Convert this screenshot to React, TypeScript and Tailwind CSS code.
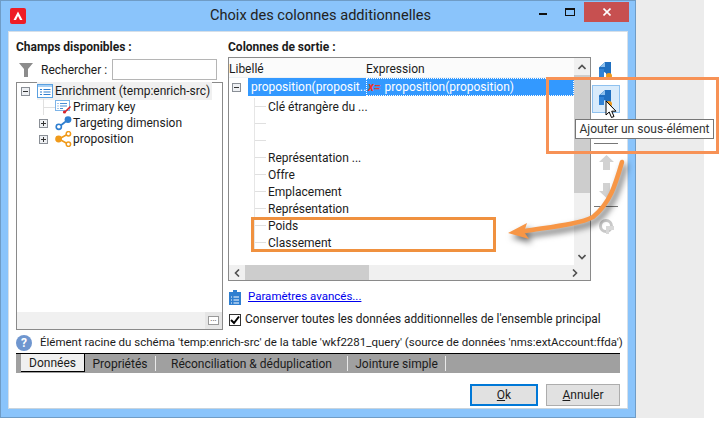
import React from 'react';

const ROWS = ['Clé étrangère du ...', '', '', 'Représentation ...', 'Offre', 'Emplacement', 'Représentation', 'Poids', 'Classement'];
const TABS = [
  { label: 'Propriétés', width: 'w-[71px]' },
  { label: 'Réconciliation & déduplication', width: 'w-[192px]' },
  { label: 'Jointure simple', width: 'w-[98px]' },
];

function ExpandBox({ open }: { open?: boolean }) {
  return (
    <span className="w-[9px] h-[9px] border border-[#8a8f96] bg-[#eef0f3] flex items-center justify-center relative shrink-0">
      <span className="w-[5px] h-px bg-[#333]" />
      {!open && <span className="absolute w-px h-[5px] bg-[#333]" />}
    </span>
  );
}

function ListIcon() {
  return (
    <svg width="16" height="14" viewBox="0 0 16 14" className="shrink-0">
      <rect x="0.5" y="0.5" width="15" height="13" fill="#fff" stroke="#5aa0e0" />
      <rect x="1" y="1" width="14" height="2" fill="#a8d0f4" />
      <path d="M3 5.5h2M3 8h2M3 10.5h2M6.5 5.5h7M6.5 8h7M6.5 10.5h7" stroke="#2f7fd0" />
    </svg>
  );
}

function KeyListIcon() {
  return (
    <svg width="17" height="14" viewBox="0 0 17 14" className="shrink-0">
      <rect x="0.5" y="0.5" width="14" height="10" fill="#fff" stroke="#7db4e8" />
      <path d="M2.5 3.5h1M2.5 6h1M5 3.5h7M5 6h7M2.5 8.5h1M5 8.5h3" stroke="#4a8fd6" />
      <path d="M15.5 6.5L10 12" stroke="#d8232a" strokeWidth="1.6" />
      <circle cx="9.5" cy="12" r="1.6" fill="#d8232a" />
    </svg>
  );
}

function LinkIcon() {
  return (
    <svg width="17" height="15" viewBox="0 0 17 15" className="shrink-0">
      <path d="M5 10L12 4.5" stroke="#2f7fd0" strokeWidth="1.8" />
      <circle cx="3.8" cy="10.8" r="2.6" fill="#fff" stroke="#2f7fd0" strokeWidth="1.6" />
      <circle cx="13" cy="3.6" r="3.4" fill="#2f7fd0" />
    </svg>
  );
}

function ShareIcon() {
  return (
    <svg width="17" height="16" viewBox="0 0 17 16" className="shrink-0">
      <path d="M4 8L13 3M4 8L13 13" stroke="#f09a1a" strokeWidth="1.6" />
      <circle cx="3.6" cy="8" r="3.4" fill="#f09a1a" />
      <circle cx="13.4" cy="2.8" r="2.2" fill="#fff" stroke="#f09a1a" strokeWidth="1.5" />
      <circle cx="13.4" cy="13.2" r="2.2" fill="#fff" stroke="#f09a1a" strokeWidth="1.5" />
    </svg>
  );
}

function BlockIcon({ dot }: { dot: string }) {
  return (
    <svg width="14" height="18" viewBox="0 0 14 18">
      <path d="M6 0H12V13H7.5A3 3 0 0 0 5 10V7H0V5.5L6 0Z" fill="#1f6fc0" />
      <path d="M0 7H5V15H0Z" fill="#2f82d6" />
      <path d="M6 0V5H1Z" fill="#8cc0ee" />
      <circle cx="10" cy="14" r="3" fill={dot} />
    </svg>
  );
}

function ScrollArrow({ d }: { d: string }) {
  return (
    <svg width="8" height="6" viewBox="0 0 8 6">
      <path d={d} fill="none" stroke="#505050" strokeWidth="1.6" />
    </svg>
  );
}

export default function App() {
  return (
    <div className="relative w-[719px] h-[433px] bg-white overflow-hidden text-[12px] text-[#1b1b1b]" style={{ fontFamily: 'Roboto, sans-serif' }}>
      <div className="flex items-start w-[704px] h-[418px] bg-[#ececec]">
        <div className="w-[636px] h-[418px] bg-[#8ac4fb] border border-[#6f9cc6] flex flex-col shrink-0">
          {/* title bar */}
          <div className="h-[30px] flex items-center relative shrink-0">
            <svg width="16" height="16" viewBox="0 0 16 16" className="ml-[9px] shrink-0">
              <rect width="16" height="16" rx="2" fill="#ee1c25" />
              <path d="M3.5 12L8 3.5L12.5 12H10L8 8L6 12Z" fill="#fff" />
            </svg>
            <span className="flex-1 text-center text-[14.6px] text-[#222] pl-[86px]">Choix des colonnes additionnelles</span>
            <div className="flex items-center h-[21px] self-start">
              <span className="w-[27px] flex justify-center pt-[5px]"><span className="w-[8px] h-[2px] bg-[#111]" /></span>
              <span className="w-[27px] flex justify-center"><span className="w-[10px] h-[8px] border border-[#111] border-t-2" /></span>
              <span className="w-[45px] h-[20px] bg-[#c75050] text-white flex items-center justify-center ml-[1px] mr-[6px]">
                <svg width="8" height="8" viewBox="0 0 8 8"><path d="M0.5 0.5L7.5 7.5M7.5 0.5L0.5 7.5" stroke="#fff" strokeWidth="1.6" /></svg>
              </span>
            </div>
          </div>
          {/* body */}
          <div className="mx-[7px] h-[378px] bg-white border border-[#d6dfe8] border-b-[#c8d4de] pl-[7px] pr-[7px] pt-[6px] flex flex-col">
            <div className="flex gap-[5px] h-[292px] shrink-0">
              {/* left column */}
              <div className="w-[207px] flex flex-col">
                <div className="h-[19px] font-bold leading-[19px] whitespace-nowrap">Champs disponibles :</div>
                <div className="h-[25px] flex items-center">
                  <svg width="14" height="14" viewBox="0 0 14 14" className="ml-[3px] shrink-0"><path d="M0 0H14L9 6V14H5V6Z" fill="#8c8c8c" /></svg>
                  <span className="ml-[8px] w-[71px] whitespace-nowrap">Rechercher :</span>
                  <span className="w-[105px] h-[21px] border border-[#b5b5b5] bg-white shrink-0" />
                </div>
                <div className="flex-1 border border-[#8a8a8a] flex flex-col">
                  <div className="flex-1">
                    <div className="h-[16px] flex items-center pl-[4px] gap-[7px] whitespace-nowrap">
                      <ExpandBox open />
                      <span className="flex items-center gap-[2px] bg-[#f0f0f0] pr-[2px]"><ListIcon /><span>Enrichment (temp:enrich-src)</span></span>
                    </div>
                    <div className="h-[16px] flex items-center whitespace-nowrap">
                      <span className="ml-[26px] w-[12px] h-full border-l border-[#e0e0e0] flex items-center shrink-0"><span className="w-full h-px bg-[#e0e0e0]" /></span>
                      <KeyListIcon /><span className="ml-[1px]">Primary key</span>
                    </div>
                    <div className="h-[16px] flex items-center pl-[22px] gap-[7px] whitespace-nowrap"><ExpandBox /><LinkIcon /><span className="-ml-[6px]">Targeting dimension</span></div>
                    <div className="h-[16px] flex items-center pl-[22px] gap-[7px] whitespace-nowrap"><ExpandBox /><ShareIcon /><span className="-ml-[6px]">proposition</span></div>
                  </div>
                  <div className="h-[17px] bg-[#f0f0f0] flex justify-end">
                    <span className="w-[17px] h-[17px] bg-[#e6e6e6] flex items-center justify-center">
                      <span className="w-[11px] h-[9px] border border-[#999] bg-white text-[8px] leading-[4px] text-center">...</span>
                    </span>
                  </div>
                </div>
              </div>
              {/* right column */}
              <div className="w-[392px] flex flex-col">
                <div className="h-[19px] font-bold leading-[19px] whitespace-nowrap">Colonnes de sortie :</div>
                <div className="flex h-[224px]">
                  <div className="w-[363px] border border-[#8a8a8a] flex flex-col shrink-0">
                    <div className="flex flex-1 min-h-0">
                      <div className="flex-1 flex flex-col min-w-0">
                        <div className="h-[20px] flex items-center bg-[#fbfbfb] shrink-0 border-b border-[#eef2f7] pt-[2px]">
                          <span className="w-[137px]">Libellé</span>
                          <span>Expression</span>
                        </div>
                        <div className="h-[18px] flex items-center shrink-0">
                          <span className="w-[19px] pl-[3px]"><ExpandBox open /></span>
                          <span className="w-[118px] h-full bg-[#3399ff] text-white pl-[3px] leading-[18px] whitespace-nowrap overflow-hidden">proposition(proposit..</span>
                          <span className="flex-1 h-full bg-[#3399ff] text-white border border-dotted border-white flex items-center leading-[16px] whitespace-nowrap">
                            <span className="font-bold text-[#e8392f] italic ml-[1px] mr-[4px]">x=</span>proposition(proposition)
                          </span>
                        </div>
                        <div className="pt-[2px]">
                          {ROWS.map((row, i) => (
                            <div key={i} className="h-[17px] flex items-center">
                              <span className="w-[26px] h-full border-r border-[#e6e6e6] shrink-0" />
                              <span className="w-[11px] h-px bg-[#e0e0e0] shrink-0" />
                              <span className="pl-[2px] pt-px whitespace-nowrap">{row}</span>
                            </div>
                          ))}
                        </div>
                      </div>
                      <div className="w-[16px] bg-[#f0f0f0] flex flex-col items-center shrink-0">
                        <span className="h-[17px] flex items-center"><ScrollArrow d="M0.5 5L4 1.5L7.5 5" /></span>
                        <span className="w-full h-[118px] bg-[#cdcdcd]" />
                        <span className="mt-auto h-[17px] flex items-center"><ScrollArrow d="M0.5 1L4 4.5L7.5 1" /></span>
                      </div>
                    </div>
                    <div className="h-[15px] bg-[#f0f0f0] flex items-center shrink-0">
                      <span className="w-[16px] flex justify-center"><svg width="6" height="8" viewBox="0 0 6 8"><path d="M5 0.5L1.5 4L5 7.5" fill="none" stroke="#505050" strokeWidth="1.6" /></svg></span>
                      <span className="w-[124px] h-full bg-[#cdcdcd]" />
                      <span className="ml-auto w-[30px] flex justify-center"><svg width="6" height="8" viewBox="0 0 6 8"><path d="M1 0.5L4.5 4L1 7.5" fill="none" stroke="#505050" strokeWidth="1.6" /></svg></span>
                    </div>
                  </div>
                  {/* toolbar */}
                  <div className="flex-1 flex flex-col items-center pl-[1px]">
                    <span className="h-[28px] flex items-center justify-center"><BlockIcon dot="#f09a1a" /></span>
                    <span className="w-[28px] h-[28px] bg-[#d9ebfb] border border-[#8fc1ef] flex items-center justify-center"><BlockIcon dot="#f09a1a" /></span>
                    <span className="mt-[30px] w-[24px] h-px bg-[#777]" />
                    <span className="mt-[11px]"><svg width="15" height="15" viewBox="0 0 15 15"><path d="M7.5 0L15 7H11V15H4V7H0Z" fill="#d2d2d2" /></svg></span>
                    <span className="mt-[13px]"><svg width="15" height="15" viewBox="0 0 15 15"><path d="M7.5 15L15 8H11V0H4V8H0Z" fill="#d2d2d2" /></svg></span>
                    <span className="mt-[8px] w-[24px] h-px bg-[#777]" />
                    <span className="mt-[11px]"><svg width="16" height="16" viewBox="0 0 16 16"><circle cx="8" cy="8" r="5.5" fill="none" stroke="#c8c8c8" strokeWidth="3" /><path d="M8 8H16V12H11V16H8Z" fill="#d8d8d8" /></svg></span>
                  </div>
                </div>
                <div className="h-[24px] flex items-center pt-[8px]">
                  <svg width="12" height="15" viewBox="0 0 12 15" className="ml-[1px] shrink-0"><rect y="2" width="12" height="13" fill="#2f7fd0" /><rect x="4" width="4" height="4" fill="#2f7fd0" /><path d="M2 7h1M4.5 7h5.5M2 10h1M4.5 10h5.5M2 13h1M4.5 13h5.5" stroke="#fff" /></svg>
                  <span className="ml-[7px] text-[11.5px] text-[#0000ee] underline whitespace-nowrap">Paramètres avancés...</span>
                </div>
                <div className="h-[25px] flex items-center pt-[5px]">
                  <span className="ml-[1px] w-[12px] h-[12px] border border-[#333] flex items-center justify-center shrink-0">
                    <svg width="10" height="10" viewBox="0 0 10 10"><path d="M1 5L4 8L9 1.5" fill="none" stroke="#000" strokeWidth="2" /></svg>
                  </span>
                  <span className="ml-[4px] text-[11.85px] whitespace-nowrap">Conserver toutes les données additionnelles de l'ensemble principal</span>
                </div>
              </div>
            </div>
            <div className="h-[21px] flex items-center mt-[2px] shrink-0">
              <svg width="16" height="16" viewBox="0 0 16 16" className="shrink-0"><circle cx="8" cy="8" r="8" fill="#6f96cf" /><text x="8" y="12" textAnchor="middle" fontSize="12" fontWeight="700" fill="#fff">?</text></svg>
              <span className="ml-[8px] text-[11.5px] whitespace-nowrap">Élément racine du schéma 'temp:enrich-src' de la table 'wkf2281_query' (source de données 'nms:extAccount:ffda')</span>
            </div>
            <div className="h-[20px] bg-[#a0a0a0] border-t border-black flex items-stretch w-[604px] shrink-0">
              <span className="ml-[5px] w-[64px] bg-[#f0f0f0] border-r border-b border-black flex items-center justify-center mb-[1px]">Données</span>
              {TABS.map(tab => (
                <span key={tab.label} className={`${tab.width} flex items-center justify-center border-r border-[#e8e8e8] my-[2px] whitespace-nowrap`}>{tab.label}</span>
              ))}
            </div>
            <div className="flex justify-end gap-[8px] mt-[11px] w-[604px] shrink-0">
              <span className="w-[68px] h-[22px] bg-[#e1e1e1] border-2 border-[#0078d7] flex items-center justify-center"><span><u>O</u>k</span></span>
              <span className="w-[74px] h-[22px] bg-[#e1e1e1] border border-[#adadad] flex items-center justify-center"><span><u>A</u>nnuler</span></span>
            </div>
          </div>
        </div>
      </div>

      {/* annotations over the window */}
      <div className="absolute left-[546px] top-[77px] w-[173px] h-[77px] border-[3px] border-[#f79256]" />
      <div className="absolute left-[251px] top-[217px] w-[245px] h-[35px] border-[3px] border-[#f0913f]" />
      <svg className="absolute left-[500px] top-[150px] drop-shadow-[3px_4px_3px_rgba(0,0,0,0.6)]" width="140" height="100" viewBox="0 0 140 100">
        <path d="M122 12C115 36 110 53 93 67C80 74 50 77 25 81" fill="none" stroke="#f79646" strokeWidth="4.5" strokeLinecap="round" />
        <path d="M8 83L27 73L24 82L29 89Z" fill="#f79646" />
      </svg>
      <div className="absolute left-[575px] top-[119px] w-[139px] h-[20px] bg-white border border-[#767676] flex items-center justify-center whitespace-nowrap text-[#333]">Ajouter un sous-élément</div>
      <svg className="absolute left-[605px] top-[100px]" width="13" height="19" viewBox="0 0 13 19">
        <path d="M1 1V15L4.2 12L6.5 17.5L9 16.5L6.7 11.2H11Z" fill="#fff" stroke="#000" />
      </svg>
    </div>
  );
}
